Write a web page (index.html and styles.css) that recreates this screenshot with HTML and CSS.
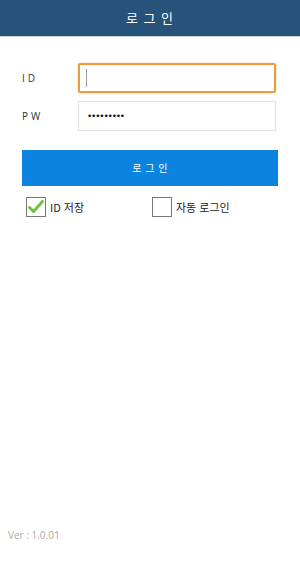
FILE: index.html
```html
<!DOCTYPE html>
<html lang="ko">
<head>
	<meta charset="UTF-8">
	<title>로그인</title>
	<link rel="stylesheet" href="styles.css">
</head>
<body>
<div class="page">
	<div class="header">로 그 인</div>

	<div class="form">
		<div class="row">
			<label class="label">ID</label>
			<div class="field focus"><span class="caret"></span></div>
		</div>
		<div class="row">
			<label class="label">PW</label>
			<div class="field"><span class="dots">&bull;&bull;&bull;&bull;&bull;&bull;&bull;&bull;&bull;</span></div>
		</div>

		<div class="btn">로 그 인</div>

		<div class="checks">
			<div class="check">
				<span class="box">
					<svg width="18" height="18" viewBox="0 0 18 18"><path d="M2.5 9.5 L6.5 13.5 L15.5 3.5" fill="none" stroke="#72c23f" stroke-width="3" stroke-linecap="round" stroke-linejoin="round"/></svg>
				</span>
				<span class="ctext">ID 저장</span>
			</div>
			<div class="check">
				<span class="box"></span>
				<span class="ctext">자동 로그인</span>
			</div>
		</div>
	</div>

	<div class="ver">Ver : 1.0.01</div>
</div>
</body>
</html>
```
FILE: styles.css
```css
html, body {
	margin: 0;
	padding: 0;
	background: #fff;
}
.page {
	display: flex;
	flex-direction: column;
	min-height: 575px;
	font-family: "Open Sans", "Noto Sans CJK KR", sans-serif;
}
.header {
	height: 36px;
	line-height: 36px;
	background: #27527a;
	border-bottom: 1px solid #c8d0d8;
	color: #fff;
	text-align: center;
	font-family: "Noto Sans CJK KR", sans-serif;
	font-size: 13px;
	letter-spacing: 1px;
}
.form {
	padding: 26px 22px 0 22px;
}
.row {
	display: flex;
	align-items: center;
	margin-bottom: 8px;
	padding-right: 2px;
}
.label {
	width: 56px;
	font-size: 10px;
	letter-spacing: 3px;
	color: #333;
}
.field {
	flex: 1;
	height: 28px;
	border: 1px solid #e2e2e2;
	display: flex;
	align-items: center;
	padding-left: 8px;
}
.field.focus {
	border: 2px solid #ec9a3c;
	border-radius: 2px;
	height: 26px;
	padding-left: 6px;
	box-shadow: 0 0 2px #f5c890;
}
.caret {
	width: 1px;
	height: 18px;
	background: #999;
}
.dots {
	font-family: "DejaVu Sans", sans-serif;
	font-size: 9px;
	letter-spacing: -1.2px;
	color: #111;
}
.btn {
	margin-top: 19px;
	height: 36px;
	line-height: 36px;
	background: #0b84e0;
	color: #fff;
	text-align: center;
	font-family: "Noto Sans CJK KR", sans-serif;
	font-size: 10px;
	letter-spacing: 0.5px;
}
.checks {
	display: flex;
	margin-top: 11px;
	padding-left: 4px;
}
.check {
	display: flex;
	align-items: center;
	width: 128px;
}
.box {
	width: 18px;
	height: 18px;
	border: 1px solid #777;
	display: flex;
	align-items: center;
	justify-content: center;
	margin-right: 4px;
}
.ctext {
	font-family: "Noto Sans CJK KR", sans-serif;
	font-size: 11px;
	color: #222;
}
.ver {
	margin-top: auto;
	margin-bottom: 33px;
	padding-left: 8px;
	font-size: 10px;
	color: #aaa;
}
```
